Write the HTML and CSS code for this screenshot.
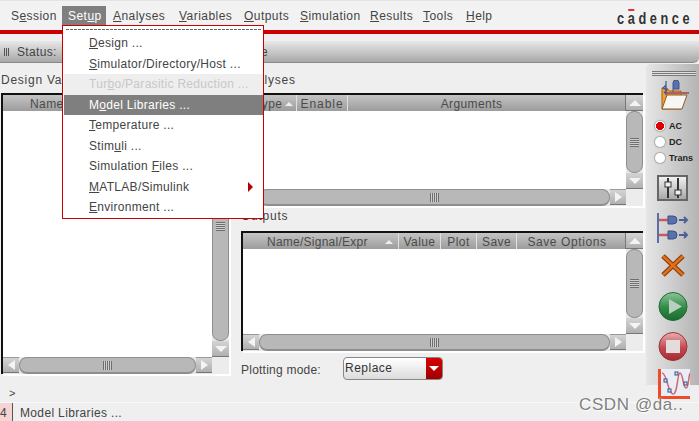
FILE: index.html
```html
<!DOCTYPE html>
<html lang="en">
<head>
<meta charset="utf-8">
<title>ADE</title>
<link rel="stylesheet" href="styles.css">
</head>
<body>
<div class="app">
  <header class="menubar">
    <nav class="menus">
      <span class="mi"><span>S<u>e</u>ssion</span></span>
      <span class="mi active"><span>Set<u>u</u>p</span></span>
      <span class="mi"><span><u>A</u>nalyses</span></span>
      <span class="mi"><span><u>V</u>ariables</span></span>
      <span class="mi"><span><u>O</u>utputs</span></span>
      <span class="mi"><span><u>S</u>imulation</span></span>
      <span class="mi"><span><u>R</u>esults</span></span>
      <span class="mi"><span><u>T</u>ools</span></span>
      <span class="mi"><span><u>H</u>elp</span></span>
    </nav>
    <div class="logo"><span class="logo-c">c</span><span class="logo-a">a</span><span>dence</span></div>
  </header>
  <div class="redline"></div>
  <div class="status"><span class="grip"></span><span class="statustext">Status: Ready | T=27 C | Simulator: spectre</span></div>
  <div class="main">
    <div class="work">
      <section class="leftpane">
        <div class="label">Design Variables</div>
        <div class="table tall">
          <div class="thead"><div class="th namecol">Name</div><div class="th fill"></div></div>
          <div class="tbody"></div>
          <div class="vbar">
            <div class="arrow"><i class="up"></i></div>
            <div class="thumb-v"><b class="hlines"></b></div>
            <div class="arrow"><i class="down"></i></div>
          </div>
          <div class="hbar">
            <div class="arrow"><i class="left"></i></div>
            <div class="thumb-h"><b class="vlines"></b></div>
            <div class="arrow"><i class="right"></i></div>
          </div>
          <div class="corner"></div>
        </div>
      </section>
      <section class="rightpane">
        <div class="label">Analyses</div>
        <div class="table analyses">
          <div class="thead">
            <div class="th type">Type <i class="sort"></i></div>
            <div class="th enable">Enable</div>
            <div class="th fill args">Arguments</div>
          </div>
          <div class="tbody"></div>
          <div class="vbar">
            <div class="arrow"><i class="up"></i></div>
            <div class="thumb-v"><b class="hlines"></b></div>
            <div class="arrow"><i class="down"></i></div>
          </div>
          <div class="hbar">
            <div class="arrow"><i class="left"></i></div>
            <div class="thumb-h"><b class="vlines"></b></div>
            <div class="arrow"><i class="right"></i></div>
          </div>
          <div class="corner"></div>
        </div>
        <div class="label outputs-label">Outputs</div>
        <div class="table outputs">
          <div class="thead">
            <div class="th nse">Name/Signal/Expr<i class="sort"></i></div>
            <div class="th value">Value</div>
            <div class="th plot">Plot</div>
            <div class="th save">Save</div>
            <div class="th fill opts">Save Options</div>
          </div>
          <div class="tbody"></div>
          <div class="vbar">
            <div class="arrow"><i class="up"></i></div>
            <div class="thumb-v"><b class="hlines"></b></div>
            <div class="arrow"><i class="down"></i></div>
          </div>
          <div class="hbar">
            <div class="arrow"><i class="left"></i></div>
            <div class="thumb-h"><b class="vlines"></b></div>
            <div class="arrow"><i class="right"></i></div>
          </div>
          <div class="corner"></div>
        </div>
        <div class="plotting">
          <span class="plotlabel">Plotting mode:</span>
          <div class="combo"><span class="combotext">Replace</span><span class="combobtn"><i class="down white"></i></span></div>
        </div>
      </section>
    </div>
    <aside class="toolbar">
      <div class="toolgrip"></div>
      <svg class="ic setup-ic" width="30" height="30" viewBox="0 0 30 30">
        <path d="M3 8h5l2 3h12v18H3z" fill="#f0a030" stroke="#b85c10"/>
        <path d="M8 15h20l-5 14H3z" fill="#f6f6f4" stroke="#8a5a20"/>
        <rect x="6" y="12" width="24" height="2" fill="#b06060"/>
        <path d="M14 12V3a3 3 0 0 1 6 0v6h-6" fill="#5a70a8" stroke="#3f5590"/>
        <path d="M7 1v14M7 5L4 8l4 2-3 3" fill="none" stroke="#3a55a0" stroke-width="1.2"/>
      </svg>
      <div class="radios">
        <div class="radio"><span class="dot on"></span><span>AC</span></div>
        <div class="radio"><span class="dot"></span><span>DC</span></div>
        <div class="radio"><span class="dot"></span><span>Trans</span></div>
      </div>
      <div class="sliders">
        <svg width="24" height="22" viewBox="0 0 24 22">
          <path d="M7 1v20M17 1v20" stroke="#333" stroke-width="2"/>
          <rect x="4" y="5" width="6" height="5" fill="#eee" stroke="#333"/>
          <rect x="14" y="13" width="6" height="5" fill="#eee" stroke="#333"/>
        </svg>
      </div>
      <svg class="ic net-ic" width="32" height="30" viewBox="0 0 32 30">
        <path d="M1 0v30" stroke="#5a6ea8" stroke-width="2"/>
        <path d="M2 7h9M2 22h9" stroke="#c85a60" stroke-width="2.5"/>
        <path d="M11 3h5a4 4 0 0 1 0 8h-5zM11 18h5a4 4 0 0 1 0 8h-5z" fill="#5a70a8" stroke="#34508c"/>
        <path d="M22 7h8M27 4l3 3-3 3M22 22h8M27 19l3 3-3 3" fill="none" stroke="#4a6098" stroke-width="2"/>
      </svg>
      <svg class="ic x-ic" width="24" height="25" viewBox="0 0 24 25">
        <path d="M2 3l20 19M22 3L2 22" stroke="#8a3a08" stroke-width="5"/>
        <path d="M2 3l20 19M22 3L2 22" stroke="#e0701c" stroke-width="2.6"/>
      </svg>
      <svg class="ic play-ic" width="30" height="29" viewBox="0 0 30 29">
        <defs>
          <linearGradient id="g1" x1="0" y1="0" x2="0" y2="1"><stop offset="0" stop-color="#8fc49a"/><stop offset=".55" stop-color="#2f8a45"/><stop offset="1" stop-color="#1c6a30"/></linearGradient>
          <linearGradient id="r1" x1="0" y1="0" x2="0" y2="1"><stop offset="0" stop-color="#e8b0b0"/><stop offset=".55" stop-color="#c04a50"/><stop offset="1" stop-color="#a52a30"/></linearGradient>
        </defs>
        <circle cx="15" cy="14.5" r="14" fill="url(#g1)" stroke="#1f6a35"/>
        <path d="M11 7l13 7.5-13 7.5z" fill="#b9cfc0"/>
      </svg>
      <svg class="ic stop-ic" width="30" height="29" viewBox="0 0 30 29">
        <circle cx="15" cy="14.5" r="14" fill="url(#r1)" stroke="#a03038"/>
        <rect x="8" y="8" width="14" height="13" fill="#e4dcdc"/>
      </svg>
      <svg class="ic wave-ic" width="32" height="30" viewBox="0 0 32 30">
        <rect x="2" y="0" width="30" height="27" fill="#e9edf6"/>
        <path d="M0 0h3v30H0zM0 27h32v3H0z" fill="#f04a28"/>
        <path d="M4 4c5 0 6 21 11 21S19 4 22 4s3 15 6 15 2-10 4-15" fill="none" stroke="#d06a6a" stroke-width="1.5"/>
        <g fill="#dfe6f4" stroke="#34508c"><rect x="6" y="10" width="3" height="3"/><rect x="10" y="20" width="3" height="3"/><rect x="17" y="3" width="3" height="3"/><rect x="26" y="13" width="3" height="3"/></g>
      </svg>
    </aside>
  </div>
  <div class="cmdline">&gt;</div>
  <footer class="footer">
    <span class="num">4</span>
    <span class="msg">Model Libraries ...</span>
  </footer>
</div>
<div class="menu">
  <div class="tear"></div>
  <div class="item"><u>D</u>esign ...</div>
  <div class="item"><u>S</u>imulator/Directory/Host ...</div>
  <div class="item disabled">Tur<u>b</u>o/Parasitic Reduction ...</div>
  <div class="item hot">M<u>o</u>del Libraries ...</div>
  <div class="item"><u>T</u>emperature ...</div>
  <div class="item">Stim<u>u</u>li ...</div>
  <div class="item">Simulation <u>F</u>iles ...</div>
  <div class="item"><u>M</u>ATLAB/Simulink<i class="sub"></i></div>
  <div class="item"><u>E</u>nvironment ...</div>
</div>
<div class="watermark">CSDN @da..</div>
</body>
</html>
```
FILE: styles.css
```css
* { box-sizing: border-box; }
html, body { margin: 0; padding: 0; }
body { width: 699px; height: 421px; overflow: hidden; position: relative; background: #efefef; font: 12px/16px "Liberation Sans", Arial, sans-serif; color: #444; letter-spacing: .35px; }
u { text-decoration: underline; text-underline-offset: 1px; }
i { display: block; font-style: normal; }
.app { width: 699px; height: 421px; display: flex; flex-direction: column; }

.menubar { height: 30px; background: #f2f2f2; border-top: 1px solid #e4e4e4; display: flex; justify-content: space-between; }
.menus { display: flex; padding: 5px 0 0 5px; gap: 0; height: 26px; }
.mi { padding: 2px 6px; height: 20px; display: block; white-space: nowrap; letter-spacing: .45px; }
.mi:nth-child(1) { width: 57px; }
.mi:nth-child(2) { width: 44px; margin-right: 1px; }
.mi:nth-child(3) { width: 66px; }
.mi:nth-child(4) { width: 65px; }
.mi:nth-child(5) { width: 56px; }
.mi:nth-child(6) { width: 70px; }
.mi:nth-child(7) { width: 53px; }
.mi:nth-child(8) { width: 43px; }
.mi.active { background: #7f7f7f; color: #fff; }
.logo { width: 82px; padding-top: 8px; color: #333; font-weight: bold; font-size: 17px; line-height: 20px; letter-spacing: 4.8px; white-space: nowrap; transform: scaleX(.75); transform-origin: 0 0; }
.logo-a { position: relative; display: inline-block; }
.logo-a::before { content: ""; position: absolute; left: 1px; top: 0; width: 8px; height: 2px; background: #e03030; }
.redline { height: 4px; background: #cc0000; }

.status { height: 22px; margin-top: 7px; background: linear-gradient(#e8e8e8, #a8a8a8); border-bottom: 1px solid #8a8a8a; border-radius: 0 0 6px 0; display: flex; align-items: center; gap: 7px; padding-left: 4px; flex: none; }
.statustext { letter-spacing: .35px; word-spacing: .7px; white-space: nowrap; }
.grip { width: 6px; height: 8px; background: repeating-linear-gradient(90deg, #555 0 1px, transparent 1px 2px); }

.main { flex: 1; display: flex; min-height: 0; }
.work { flex: 1; display: grid; grid-template-columns: 241px 405px; min-width: 0; }
.leftpane, .rightpane { padding-top: 9px; display: flex; flex-direction: column; }
.leftpane { padding-left: 1px; }
.label { height: 21px; line-height: 17px; letter-spacing: .75px; }
.outputs-label { height: 23px; margin-top: 2px; }

.table { display: grid; background: #efefef; border-top: 2px solid #111; border-left: 2px solid #111; box-shadow: 2px 2px 0 #fff; }
.tall { width: 228px; height: 281px; grid-template-columns: 1fr 17px; grid-template-rows: 16px 1fr 17px; }
.analyses { width: 402px; height: 113px; grid-template-columns: 1fr 17px; grid-template-rows: 16px 1fr 17px; }
.outputs { width: 402px; height: 120px; grid-template-columns: 1fr 17px; grid-template-rows: 16px 1fr 17px; }
.thead { display: flex; background: linear-gradient(#c4c4c4, #9c9c9c); line-height: 16px; color: #4a4a4a; overflow: hidden; white-space: nowrap; }
.th { border-right: 1px solid #e0e0e0; height: 16px; padding-top: 1px; display: flex; justify-content: center; align-items: center; gap: 3px; letter-spacing: .4px; }
.th.fill { flex: 1; border-right: 1px solid #777; }
.namecol { width: 120px; padding-left: 27px; justify-content: flex-start; }
.type { width: 54px; padding-left: 9px; }
.enable { width: 51px; letter-spacing: .95px; }
.args { padding-right: 30px; }
.opts { padding-right: 8px; letter-spacing: .6px; }
.nse { width: 156px; justify-content: flex-start; padding-left: 24px; gap: 17px; letter-spacing: .25px; }
.value { width: 42px; }
.plot { width: 36px; }
.save { width: 40px; }
.sort { width: 0; height: 0; border: 4px solid transparent; border-top: 0; border-bottom: 4px solid #eee; }
.tbody { background: #fff; }
.vbar { grid-column: 2; grid-row: 1 / 3; display: flex; flex-direction: column; background: #e6e6e6; }
.hbar { grid-column: 1; grid-row: 3; display: flex; background: #e6e6e6; }
.corner { background: #ececec; }
.arrow { flex: none; width: 16px; height: 16px; background: linear-gradient(#d4d4d4, #b0b0b0); border-bottom: 1px solid #777; display: flex; align-items: center; justify-content: center; }
.hbar .arrow { border-top: 1px solid #999; }
.vbar .arrow { width: 17px; }
.thumb-v { flex: 1; background: #b8b8b8; border-radius: 8px; border: 1px solid #8e8e8e; display: flex; align-items: center; justify-content: center; }
.thumb-h { flex: 1; background: #b8b8b8; border-radius: 8px; border: 1px solid #8e8e8e; border-bottom-width: 2px; display: flex; align-items: center; justify-content: center; }
.hlines { width: 9px; height: 9px; background: repeating-linear-gradient(#6e6e6e 0 1px, #d0d0d0 1px 2px); }
.vlines { width: 9px; height: 9px; background: repeating-linear-gradient(90deg, #6e6e6e 0 1px, #d0d0d0 1px 2px); }
.up, .down, .left, .right { width: 0; height: 0; border: 5px solid transparent; }
.up { border-top: 0; border-bottom: 6px solid #f4f4f4; border-left-width: 6px; border-right-width: 6px; }
.down { border-bottom: 0; border-top: 6px solid #f4f4f4; border-left-width: 6px; border-right-width: 6px; }
.left { border-left: 0; border-right: 7px solid #f4f4f4; }
.right { border-right: 0; border-left: 7px solid #f4f4f4; }

.plotting { display: flex; align-items: center; margin-top: 5px; height: 24px; }
.plotlabel { width: 102px; letter-spacing: .23px; padding-top: 4px; }
.combo { width: 100px; height: 23px; border: 1px solid #888; border-radius: 4px; display: flex; background: linear-gradient(#fff, #dcdcdc); overflow: hidden; }
.combotext { flex: 1; padding: 2px 0 0 1px; letter-spacing: .5px; color: #333; }
.combobtn { width: 16px; background: linear-gradient(#d80000, #a00000); display: flex; align-items: center; justify-content: center; }
.down.white { border-width: 5px 5px 0; border-top-color: #fff; }

.toolbar { width: 53px; background: linear-gradient(90deg, #e6e6e6, #b4b4b4); border-radius: 4px 0 0 0; display: flex; flex-direction: column; align-items: center; padding-top: 7px; margin-top: 1px; }
.toolgrip { width: 44px; height: 5px; margin-left: 2px; background: repeating-linear-gradient(#777 0 1px, #e0e0e0 1px 2px); flex: none; }
.ic { flex: none; display: block; }
.setup-ic { margin-top: 4px; margin-left: 2px; }
.radios { margin-top: 8px; align-self: flex-start; padding-left: 9px; }
.radio { display: flex; align-items: center; gap: 4px; height: 16px; font-size: 9px; font-weight: bold; letter-spacing: 0; color: #222; }
.dot { width: 10px; height: 10px; border-radius: 50%; background: #fff; box-shadow: 0 0 1px 1px #aaa; flex: none; }
.dot.on { background: radial-gradient(#dd0000 55%, #fff 60%); }
.sliders { margin-top: 9px; width: 31px; height: 26px; border: 2px solid #666; background: linear-gradient(#f0f0f0, #a8a8a8); display: flex; align-items: center; justify-content: center; flex: none; }
.net-ic { margin-top: 12px; }
.x-ic { margin-top: 10px; }
.play-ic { margin-top: 14px; }
.stop-ic { margin-top: 11px; }
.wave-ic { margin-top: 8px; margin-left: 2px; }

.cmdline { height: 18px; padding: 2px 0 0 9px; font-size: 11px; line-height: 12px; border-bottom: 1px solid #f8f8f8; flex: none; }
.footer { height: 18px; flex: none; display: flex; align-items: center; }
.num { width: 13px; height: 18px; background: #f7d4d4; border-right: 1px solid #555; line-height: 20px; }
.msg { padding-left: 7px; letter-spacing: .35px; padding-top: 2px; }

.menu { position: absolute; left: 62px; top: 25px; width: 202px; height: 194px; background: #fff; border: 1px solid #cc0000; padding: 2px 0 0 1px; }
.tear { height: 4px; margin-bottom: 1px; padding: 0; background: repeating-linear-gradient(90deg, #666 0 3px, transparent 3px 4px) 2px 1px / 196px 1px no-repeat; }
.item { height: 20.5px; line-height: 21px; padding-left: 25px; white-space: nowrap; position: relative; letter-spacing: .3px; }
.item.disabled { background: #eeeeee; color: #c8c8c8; }
.item.hot { background: #7f7f7f; color: #fff; }
.sub { position: absolute; right: 10px; top: 5px; border: 5px solid transparent; border-right: 0; border-left-color: #b00000; }
.watermark { position: absolute; left: 579px; top: 395px; font-size: 17px; line-height: 20px; color: #808080; letter-spacing: .6px; text-shadow: 0 0 2px #fff, 1px 1px 1px #fff; }
```
